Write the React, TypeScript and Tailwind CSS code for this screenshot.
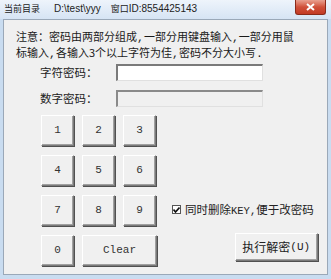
import React, { useState } from 'react';

const cjk = { fontFamily: '"Noto Sans CJK SC", "Liberation Sans", sans-serif' };
const mono = { fontFamily: '"Liberation Mono", "Noto Sans CJK SC", monospace' };
const sans = { fontFamily: '"Liberation Sans", sans-serif' };

const Key = ({ label, wide = false }: { label: string; wide?: boolean }) => {
  return <button style={mono} className={`h-[31px] ${wide ? 'w-[75px] col-span-2' : 'w-[33px]'} bg-[#f0f0f0] text-[11px] text-[#333] border border-t-white border-l-white border-r-[#7a7a7a] border-b-[#7a7a7a] shadow-[inset_-1px_-1px_0_#a0a0a0,1px_1px_0_#505050] flex items-center justify-center`}>
      {label}
    </button>;
};

const C = ({ ch }: { ch: string }) => <span style={mono} className="text-[11.5px]">{ch}</span>;

const App = () => {
  const [checked, setChecked] = useState(true);
  const keys = ['1', '2', '3', '4', '5', '6', '7', '8', '9'];
  return <div style={cjk} className="w-[331px] h-[279px] bg-[#c9dcf0] flex flex-col overflow-hidden">
      {/* title bar */}
      <div className="h-[19px] bg-gradient-to-b from-[#eef4fb] to-[#d6e4f4] flex items-start justify-between pl-[4px] pr-[5px]">
        <div className="flex items-center h-[17px] text-[9px] text-[#222]">
          <span>当前目录</span>
          <span style={sans} className="text-[10px] ml-[14px]">D:\test\yyy</span>
          <span className="ml-[10px]">窗口<span style={sans} className="text-[10px]">ID:8554425143</span></span>
        </div>
        <div className="w-[31px] h-[15px] rounded-b-[3px] bg-gradient-to-b from-[#e8a090] via-[#d0503a] to-[#c23a24] border border-[#8a2a1a] border-t-0 flex items-center justify-center">
          <svg width="9" height="8" viewBox="0 0 9 8">
            <path d="M1 1 L8 7 M8 1 L1 7" stroke="white" strokeWidth="2" />
          </svg>
        </div>
      </div>

      {/* body */}
      <div className="flex-1 mx-[3px] mb-[4px] bg-[#f0f0f0] border border-[#9aa8b8] flex flex-col">
        <div className="pl-[12px] pt-[9px] text-[11px] leading-[15px] text-[#1a1a1a]">
          <div>注意：密码由两部分组成<C ch="," />一部分用键盘输入<C ch="," />一部分用鼠</div>
          <div>标输入<C ch="," />各输入3个以上字符为佳<C ch="," />密码不分大小写<C ch="." /></div>
        </div>

        <div className="flex flex-col gap-[9px] mt-[3px] pl-[36px] text-[11.5px] text-[#222]">
          <div className="flex items-center">
            <span className="w-[76px]">字符密码：</span>
            <div className="w-[147px] h-[17px] bg-white border border-t-[#7a7a7a] border-l-[#7a7a7a] border-t-2 border-l-2 border-r-[#e0e0e0] border-b-[#e0e0e0]" />
          </div>
          <div className="flex items-center">
            <span className="w-[76px]">数字密码：</span>
            <div className="w-[147px] h-[17px] bg-[#f0f0f0] border border-t-[#8a8a8a] border-l-[#8a8a8a] border-t-2 border-l-2 border-r-[#e0e0e0] border-b-[#e0e0e0]" />
          </div>
        </div>

        <div className="flex mt-[7px] pl-[37px]">
          <div className="grid grid-cols-[33px_33px_33px] gap-x-[8px] gap-y-[9px]">
            {keys.map(k => <Key key={k} label={k} />)}
            <Key label="0" />
            <Key label="Clear" wide />
          </div>
          <div className="flex flex-col ml-[16px]">
            <label className="flex items-center mt-[86px] text-[11.5px] text-[#222] gap-[4px]">
              <span onClick={() => setChecked(!checked)} className="w-[9px] h-[9px] bg-white border border-[#555] flex items-center justify-center">
                {checked && <svg width="7" height="6" viewBox="0 0 7 6"><path d="M0.5 2.5 L2.5 5 L6.5 0.5" stroke="#111" strokeWidth="1.6" fill="none" /></svg>}
              </span>
              <span>同时删除<span style={mono} className="text-[10.5px]">KEY,</span>便于改密码</span>
            </label>
            <div className="flex justify-end mt-[14px] -mr-[4px]">
              <button className="w-[83px] h-[28px] bg-[#f0f0f0] text-[12px] text-[#222] border border-t-white border-l-white border-r-[#7a7a7a] border-b-[#7a7a7a] shadow-[inset_-1px_-1px_0_#a0a0a0,1px_1px_0_#505050] flex items-center justify-center">
                执行解密<span style={mono} className="text-[11px]">(U)</span>
              </button>
            </div>
          </div>
        </div>
      </div>
    </div>;
};

export default App;
